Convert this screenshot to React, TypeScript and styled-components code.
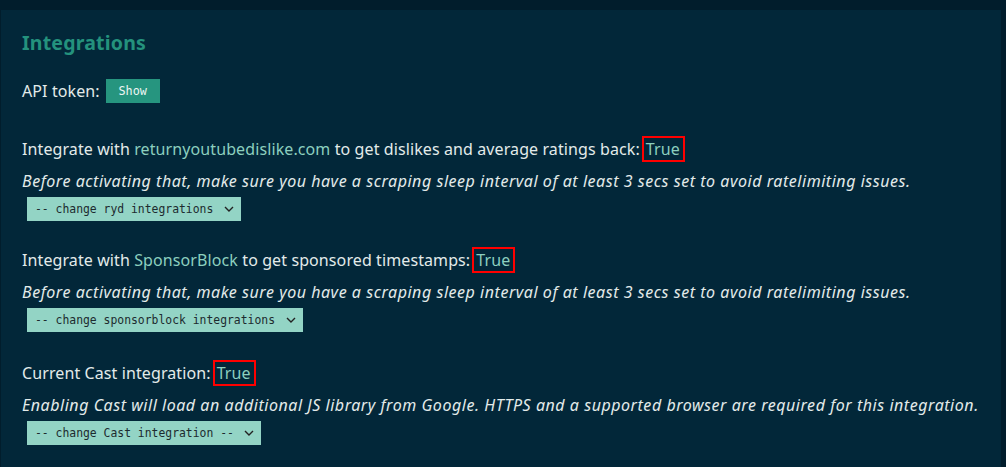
import React from "react";
import styled, { createGlobalStyle } from "styled-components";

const Global = createGlobalStyle`
  html, body { margin: 0; padding: 0; background: #011d2c; }
  body { font-family: "Noto Sans", sans-serif; }
`;

const Page = styled.div`
  padding: 10px 5px 0 1px;
  min-height: 467px;
  box-sizing: border-box;
`;

const Panel = styled.section`
  background: #022739;
  padding: 22px 21px 22px 21px;
  min-height: 457px;
  box-sizing: border-box;
  color: #e3ebea;
  font-size: 16px;
  letter-spacing: 0.1px;
`;

const Title = styled.h2`
  margin: 0 0 25px 0;
  font-size: 19.5px;
  font-weight: 700;
  color: #24927d;
  line-height: 22px;
  letter-spacing: 0.2px;
`;

const Row = styled.div`
  display: flex;
  align-items: center;
  gap: 6px;
  line-height: 24px;
`;

const ShowButton = styled.button`
  background: #26957f;
  color: #eef6f4;
  border: none;
  font-family: "DejaVu Sans Mono", monospace;
  font-size: 11.8px;
  height: 24px;
  width: 54px;
  padding: 0;
  cursor: pointer;
`;

const Block = styled.div<{ $gap: number }>`
  margin-top: ${(p) => p.$gap}px;
`;

const Line = styled.p`
  margin: 0;
  line-height: 24px;
  white-space: nowrap;
`;

const Link = styled.a`
  color: #8ccfbf;
  text-decoration: none;
`;

const Value = styled.span`
  color: #8ccfbf;
  border: 2px solid #ff0000;
  padding: 0 3px 0 2px;
  margin-left: 2px;
`;

const Note = styled.p`
  margin: 9px 0 4px 0;
  font-style: italic;
  line-height: 22px;
  letter-spacing: 0.54px;
  white-space: nowrap;
`;

const Select = styled.select`
  margin-left: 5px;
  height: 24px;
  box-sizing: border-box;
  background: #93d4c5;
  color: #1d2b2f;
  border: none;
  border-radius: 0;
  font-family: "DejaVu Sans Mono", monospace;
  font-size: 11.4px;
  letter-spacing: 0;
  padding: 0 27px 0 8px;
  appearance: none;
  -webkit-appearance: none;
  background-image: url("data:image/svg+xml,%3Csvg xmlns='http://www.w3.org/2000/svg' width='10' height='6' viewBox='0 0 10 6'%3E%3Cpath d='M1 1l4 4 4-4' fill='none' stroke='%23222' stroke-width='1.4'/%3E%3C/svg%3E");
  background-repeat: no-repeat;
  background-position: right 7px center;
`;

export default function App() {
  return (
    <>
      <Global />
      <Page>
        <Panel>
          <Title>Integrations</Title>
          <Row>
            API token: <ShowButton>Show</ShowButton>
          </Row>
          <Block $gap={34}>
            <Line>
              Integrate with <Link>returnyoutubedislike.com</Link> to get dislikes and average ratings back:<Value>True</Value>
            </Line>
            <Note>Before activating that, make sure you have a scraping sleep interval of at least 3 secs set to avoid ratelimiting issues.</Note>
            <Select defaultValue="">
              <option value="">-- change ryd integrations</option>
            </Select>
          </Block>
          <Block $gap={27}>
            <Line>
              Integrate with <Link>SponsorBlock</Link> to get sponsored timestamps:<Value>True</Value>
            </Line>
            <Note>Before activating that, make sure you have a scraping sleep interval of at least 3 secs set to avoid ratelimiting issues.</Note>
            <Select defaultValue="">
              <option value="">-- change sponsorblock integrations</option>
            </Select>
          </Block>
          <Block $gap={29}>
            <Line>
              Current Cast integration:<Value>True</Value>
            </Line>
            <Note>Enabling Cast will load an additional JS library from Google. HTTPS and a supported browser are required for this integration.</Note>
            <Select defaultValue="">
              <option value="">-- change Cast integration --</option>
            </Select>
          </Block>
        </Panel>
      </Page>
    </>
  );
}
